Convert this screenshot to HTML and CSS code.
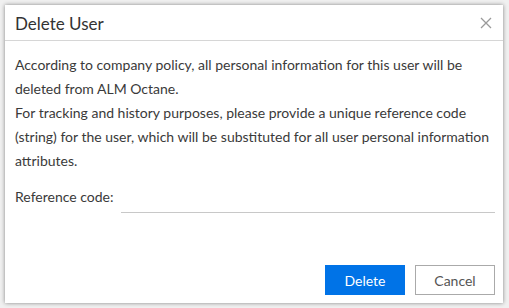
FILE: index.html
```html
<!DOCTYPE html>
<html>
<head>
<meta charset="utf-8">
<link rel="stylesheet" href="styles.css">
</head>
<body>
<div class="dialog">
  <div class="header">
    <div class="title">Delete User</div>
    <svg class="close" width="12" height="12" viewBox="0 0 12 12"><path d="M1 1L11 11M11 1L1 11" stroke="#9a9a9a" stroke-width="1.3" fill="none"/></svg>
  </div>
  <div class="body">
    <p class="text">According to company policy, all personal information for this user will be deleted from ALM Octane.<br>For tracking and history purposes, please provide a unique reference code (string) for the user, which will be substituted for all user personal information attributes.</p>
    <div class="field">
      <label class="label">Reference code:</label>
      <div class="input"></div>
    </div>
  </div>
  <div class="footer">
    <button class="btn primary">Delete</button>
    <button class="btn secondary">Cancel</button>
  </div>
</div>
</body>
</html>
```
FILE: styles.css
```css
html, body { margin: 0; padding: 0; }
body {
  width: 509px; height: 308px;
  background: #f0f0f0;
  font-family: Lato, "Open Sans", sans-serif;
  color: #333;
  padding: 5px 6px 0 5px;
  box-sizing: border-box;
}
.dialog {
  width: 498px; height: 298px;
  background: #fff;
  box-shadow: 0 0 4px rgba(0,0,0,0.45);
  display: flex; flex-direction: column;
  box-sizing: border-box;
}
.header {
  height: 35px;
  border-bottom: 1px solid #d6d6d6;
  display: flex; align-items: center; justify-content: space-between;
  padding: 0 10px 0 10px;
}
.title { font-size: 17px; color: #333; padding-top: 2px; }
.close { margin-right: 1px; }
.body { padding: 12px 8px 0 10px; flex: 1; }
.text { margin: 0; font-size: 14px; line-height: 24px; color: #3a3a3a; }
.field { display: flex; align-items: flex-start; margin-top: 14px; }
.label { font-size: 14px; width: 106px; line-height: 20px; color: #3a3a3a; }
.input { flex: 1; height: 25px; border-bottom: 1px solid #c8c8c8; }
.footer {
  display: flex; justify-content: flex-end; gap: 10px;
  padding: 0 8px 8px 0;
}
.btn {
  width: 80px; height: 30px;
  font-family: inherit; font-size: 14px;
  box-sizing: border-box;
  padding: 0; cursor: pointer;
}
.primary { background: #0073e7; border: none; color: #fff; }
.secondary { background: #fff; border: 1px solid #aaa; color: #555; }
```
